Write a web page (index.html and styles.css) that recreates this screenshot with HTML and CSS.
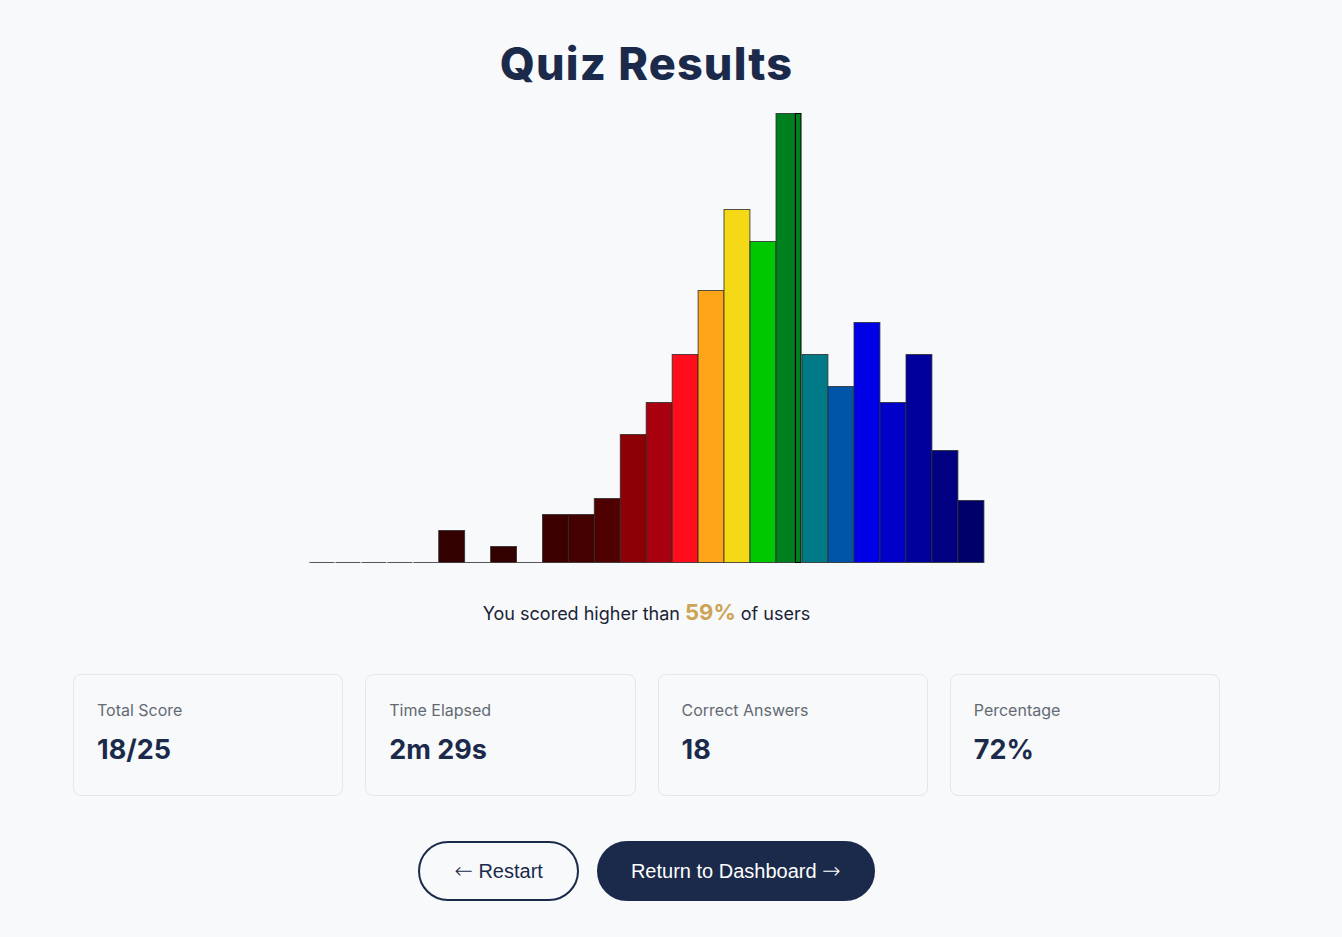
FILE: index.html
```html
<!DOCTYPE html>
<html lang="en">
<head>
<meta charset="utf-8">
<title>Quiz Results</title>
<link rel="stylesheet" href="styles.css">
</head>
<body>
<main class="results">
  <h1 class="title">Quiz Results</h1>
  <svg class="histogram" width="676" height="451" viewBox="0 0 676 451" xmlns="http://www.w3.org/2000/svg">
    <g class="empty" stroke="#555" stroke-width="1">
      <line x1="0.5" y1="449.5" x2="25.4" y2="449.5"/>
      <line x1="26.4" y1="449.5" x2="51.4" y2="449.5"/>
      <line x1="52.4" y1="449.5" x2="77.3" y2="449.5"/>
      <line x1="78.3" y1="449.5" x2="103.3" y2="449.5"/>
      <line x1="104.3" y1="449.5" x2="129.2" y2="449.5"/>
      <line x1="156.1" y1="449.5" x2="181.1" y2="449.5"/>
      <line x1="208" y1="449.5" x2="233" y2="449.5"/>
    </g>
    <g class="bars" stroke="#2b2b2b" stroke-opacity="0.8" stroke-width="1">
      <rect x="129.7" y="417.5" width="25.9" height="32" fill="#330000"/>
      <rect x="181.6" y="433.5" width="25.9" height="16" fill="#330000"/>
      <rect x="233.5" y="401.5" width="25.9" height="48" fill="#3d0000"/>
      <rect x="259.4" y="401.5" width="25.9" height="48" fill="#440000"/>
      <rect x="285.3" y="385.5" width="25.9" height="64" fill="#4f0000"/>
      <rect x="311.3" y="321.5" width="25.9" height="128" fill="#8c0006"/>
      <rect x="337.2" y="289.5" width="25.9" height="160" fill="#a9000f"/>
      <rect x="363.2" y="241.5" width="25.9" height="208" fill="#ff0d1a"/>
      <rect x="389.1" y="177.5" width="25.9" height="272" fill="#ffa51a"/>
      <rect x="415.0" y="96.5" width="25.9" height="353" fill="#f5d816"/>
      <rect x="441.0" y="128.5" width="25.9" height="321" fill="#00c800"/>
      <rect x="467" y="0.5" width="19" height="449" fill="#007f1e"/>
      <rect x="486.5" y="0.5" width="5.5" height="449" fill="#007f1e" stroke="#000" stroke-opacity="1"/>
      <rect x="493" y="241.5" width="25.9" height="208" fill="#007a87"/>
      <rect x="519" y="273.5" width="25.9" height="176" fill="#0055a8"/>
      <rect x="545" y="209.5" width="25.9" height="240" fill="#0000e6"/>
      <rect x="571" y="289.5" width="25.9" height="160" fill="#0000c8"/>
      <rect x="597" y="241.5" width="25.9" height="208" fill="#00009b"/>
      <rect x="623" y="337.5" width="25.9" height="112" fill="#000080"/>
      <rect x="649" y="387.5" width="25.9" height="62" fill="#00006b"/>
    </g>
  </svg>
  <p class="percentile">You scored higher than <span class="percentile-value">59%</span> of users</p>
  <section class="stats">
    <div class="card">
      <div class="card-label">Total Score</div>
      <div class="card-value">18/25</div>
    </div>
    <div class="card">
      <div class="card-label">Time Elapsed</div>
      <div class="card-value">2m 29s</div>
    </div>
    <div class="card">
      <div class="card-label">Correct Answers</div>
      <div class="card-value">18</div>
    </div>
    <div class="card">
      <div class="card-label">Percentage</div>
      <div class="card-value">72%</div>
    </div>
  </section>
  <div class="actions">
    <button class="btn btn-outline" type="button"><span class="arrow">←</span> Restart</button>
    <button class="btn btn-solid" type="button">Return to Dashboard <span class="arrow">→</span></button>
  </div>
</main>
</body>
</html>
```
FILE: styles.css
```css
html, body {
  margin: 0;
  padding: 0;
  background: #f7f9fb;
}

body {
  font-family: Inter, "Noto Sans", sans-serif;
  color: #1b2a4a;
}

.results {
  width: 1147px;
  margin-left: 73px;
  padding-top: 37px;
  display: flex;
  flex-direction: column;
  align-items: center;
}

.title {
  margin: 0 0 23px;
  font-family: Inter, sans-serif;
  font-weight: 800;
  font-size: 45px;
  line-height: 53px;
  color: #1b2a4a;
  letter-spacing: 1.2px;
}

.histogram {
  display: block;
}

.percentile {
  margin: 36px 0 0;
  font-size: 18px;
  line-height: 28px;
  color: #1b2335;
}

.percentile-value {
  font-size: 22px;
  line-height: 1;
  font-weight: 700;
  color: #cda355;
}

.stats {
  align-self: stretch;
  margin-top: 46px;
  display: grid;
  grid-template-columns: repeat(4, 1fr);
  gap: 22px;
}

.card {
  border: 1px solid #e4e7eb;
  border-radius: 8px;
  background: #f7f9fb;
  padding: 23px 23px 28px;
}

.card-label {
  font-size: 16px;
  line-height: 24px;
  color: #646a73;
}

.card-value {
  margin-top: 11px;
  font-size: 27px;
  line-height: 34px;
  font-weight: 700;
  color: #1b2a4a;
}

.actions {
  margin-top: 45px;
  display: flex;
  gap: 18px;
}

.btn {
  box-sizing: border-box;
  height: 60px;
  border-radius: 30px;
  font-family: "Liberation Sans", Arial, sans-serif;
  font-size: 20px;
  line-height: 24px;
  cursor: pointer;
}

.arrow {
  font-family: "DejaVu Sans", sans-serif;
  font-size: 22px;
  font-weight: 200;
  line-height: 1;
}

.btn-outline {
  padding: 0 34px;
  border: 2px solid #1b2a4a;
  background: transparent;
  color: #1b2a4a;
}

.btn-solid {
  padding: 0 32px;
  border: 2px solid #1b2a4a;
  background: #1b2a4a;
  color: #ffffff;
}
```
